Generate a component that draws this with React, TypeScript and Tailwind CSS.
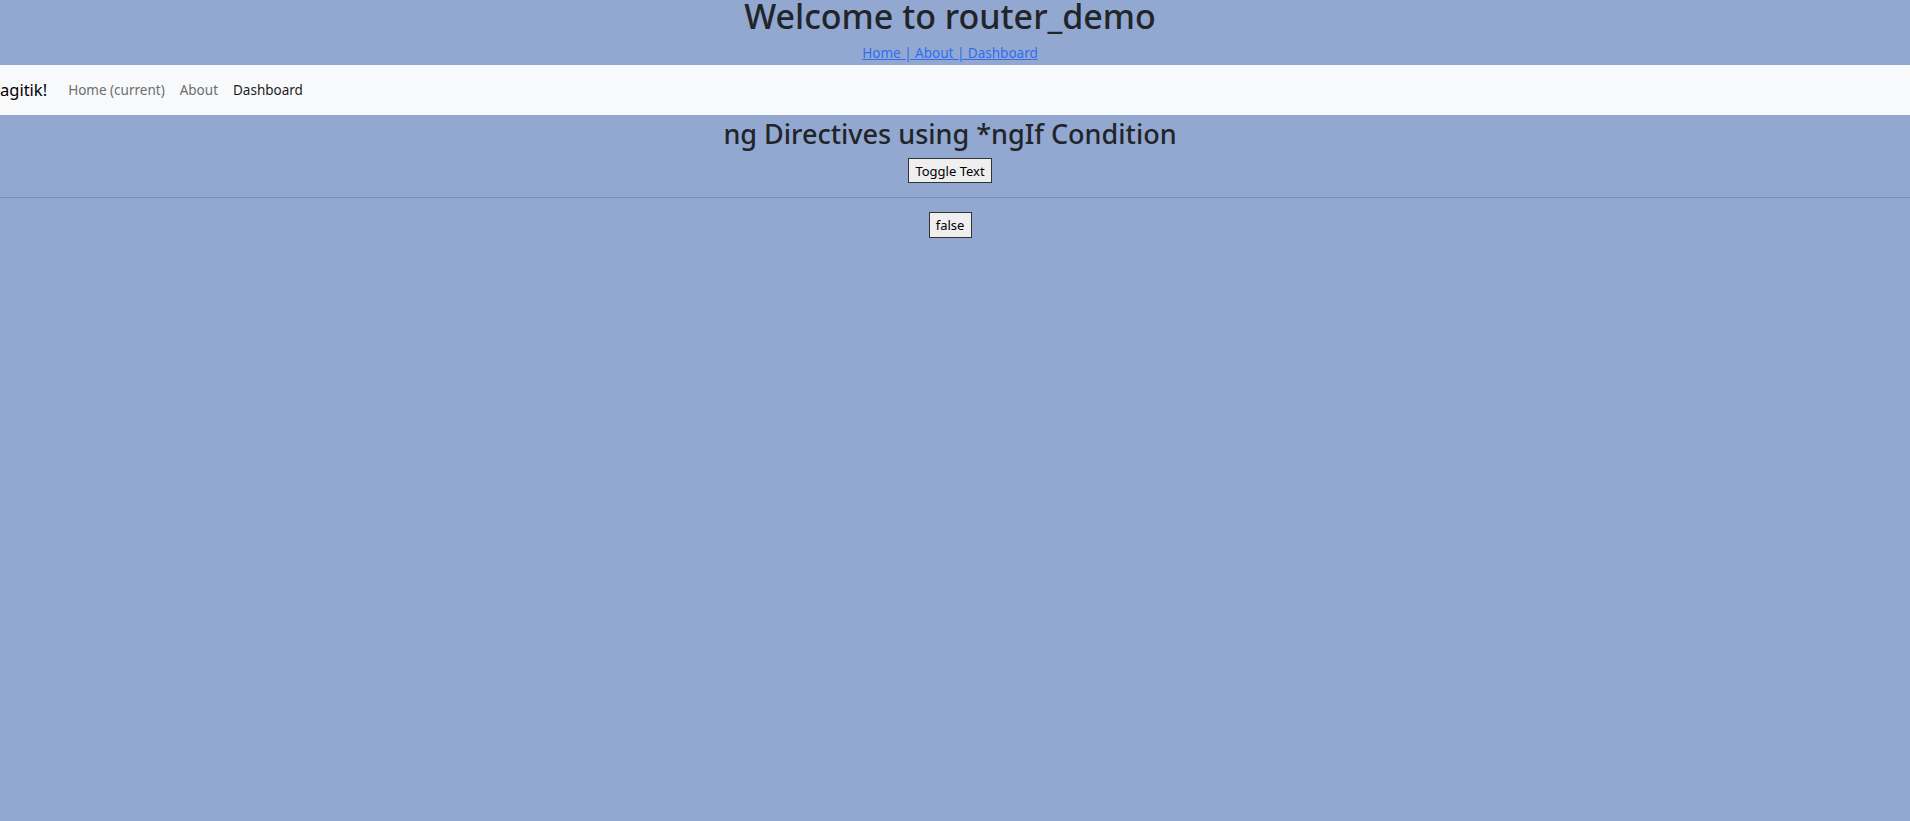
import React from "react";

export default function App() {
  const font = { fontFamily: '"Noto Sans", "Open Sans", sans-serif' };
  return (
    <div className="min-h-[821px] w-full bg-[#93a8d1] text-[#212529]" style={font}>
      <header className="flex h-[65px] flex-col items-center pr-[10px]">
        <h1 className="m-0 text-[34px] font-medium leading-[32px]">Welcome to router_demo</h1>
        <div className="mt-[11px] text-[13.5px] leading-[20px]">
          <a href="#" className="text-[#2f6ef0] underline">Home | About | Dashboard</a>
        </div>
      </header>
      <nav className="flex h-[50px] items-center bg-[#f8f9fa]">
        <span className="text-[16.5px] leading-[24px] text-black">agitik!</span>
        <div className="ml-[21px] flex items-center gap-[15px] text-[13.5px] leading-[22px]">
          <a href="#" className="text-[#6c6d6e]">Home (current)</a>
          <a href="#" className="text-[#6c6d6e]">About</a>
          <a href="#" className="text-[#1c1c1c]">Dashboard</a>
        </div>
      </nav>
      <section className="flex flex-col items-center pt-[3px] pr-[10px]">
        <h2 className="m-0 text-[27px] font-medium leading-[32px]">ng Directives using *ngIf Condition</h2>
        <button className="mt-[8px] h-[25px] w-[84px] border border-[#333] bg-[#efefef] text-[13px] leading-[20px] text-black">
          Toggle Text
        </button>
      </section>
      <hr className="mt-[14px] border-0 border-t border-[#7a8db6]" />
      <div className="flex justify-center pt-[14px] pr-[10px]">
        <button className="h-[26px] w-[43px] border border-[#333] bg-[#efefef] text-[13px] leading-[20px] text-black">
          false
        </button>
      </div>
    </div>
  );
}
